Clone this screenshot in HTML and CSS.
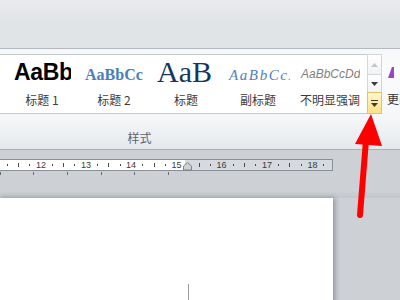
FILE: index.html
```html
<!DOCTYPE html>
<html lang="zh-CN">
<head>
<meta charset="utf-8">
<title>样式</title>
<link rel="stylesheet" href="styles.css">
</head>
<body>
<div class="top"></div>
<div class="ribbon">
  <div class="ribbon-row">
    <div class="gallery">
      <div class="pv pv1"><span>AaBb</span></div>
      <div class="lb">标题 1</div>
      <div class="pv pv2"><span>AaBbCc</span></div>
      <div class="lb">标题 2</div>
      <div class="pv pv3"><span>AaBb</span></div>
      <div class="lb">标题</div>
      <div class="pv pv4"><span>AaBbCcDd</span></div>
      <div class="lb">副标题</div>
      <div class="pv pv5"><span>AaBbCcDd</span></div>
      <div class="lb">不明显强调</div>
    </div>
    <div class="scroll">
      <div class="sbtn up"><svg width="7" height="4" viewBox="0 0 7 4"><polygon points="0,4 3.5,0 7,4"/></svg></div>
      <div class="sbtn down"><svg width="7" height="4" viewBox="0 0 7 4"><polygon points="0,0 3.5,4 7,0"/></svg></div>
      <div class="sbtn more"><svg width="7" height="7" viewBox="0 0 7 7"><rect x="0" y="0" width="7" height="1"/><polygon points="0,3 3.5,7 7,3"/></svg></div>
    </div>
    <div class="change">
      <svg class="change-icon" width="8" height="11" viewBox="0 0 8 11"><polygon points="0,11 4,0 6,0 6,11"/></svg>
      <span class="change-text">更改样式</span>
    </div>
  </div>
  <div class="group-label">样式</div>
</div>
<div class="ruler-zone">
  <svg class="ruler" width="400" height="48" viewBox="0 0 400 48">
    <rect x="-2" y="9.5" width="187.5" height="11" fill="#ffffff"/>
    <rect x="185.5" y="9.5" width="147" height="11" fill="#d6d9dd"/>
    <rect x="-2" y="9.5" width="334.5" height="11" fill="none" stroke="#8b9096"/>
    <g fill="#4a4a4a">
      <rect x="7" y="14" width="1" height="2"/><rect x="18" y="13" width="1" height="4"/><rect x="29" y="14" width="1" height="2"/>
      <rect x="52" y="14" width="1" height="2"/><rect x="63" y="13" width="1" height="4"/><rect x="74" y="14" width="1" height="2"/>
      <rect x="97" y="14" width="1" height="2"/><rect x="108" y="13" width="1" height="4"/><rect x="120" y="14" width="1" height="2"/>
      <rect x="142" y="14" width="1" height="2"/><rect x="154" y="13" width="1" height="4"/><rect x="165" y="14" width="1" height="2"/>
      <rect x="199" y="13" width="1" height="4"/><rect x="210" y="14" width="1" height="2"/>
      <rect x="233" y="14" width="1" height="2"/><rect x="244" y="13" width="1" height="4"/><rect x="255" y="14" width="1" height="2"/>
      <rect x="278" y="14" width="1" height="2"/><rect x="289" y="13" width="1" height="4"/><rect x="301" y="14" width="1" height="2"/>
      <rect x="323" y="14" width="1" height="2"/>
    </g>
    <g class="ruler-num" text-anchor="middle">
      <text x="41" y="18">12</text>
      <text x="86" y="18">13</text>
      <text x="131" y="18">14</text>
      <text x="176.5" y="18">15</text>
      <text x="221.5" y="18">16</text>
      <text x="267" y="18">17</text>
      <text x="312.5" y="18">18</text>
    </g>
    <polygon points="183.5,20 183.5,16 187.5,12.5 191.5,16 191.5,20" fill="#cfd1d4" stroke="#7e838a"/>
    <g fill="#6a6e74">
      <rect x="0" y="22" width="1" height="3"/><rect x="33" y="22" width="1" height="3"/><rect x="67" y="22" width="1" height="3"/>
      <rect x="101" y="22" width="1" height="3"/><rect x="134" y="22" width="1" height="3"/><rect x="168" y="22" width="1" height="3"/>
    </g>
  </svg>
</div>
<div class="page">
  <div class="caret"></div>
</div>
<svg class="arrow" width="400" height="300" viewBox="0 0 400 300">
  <line x1="366" y1="140" x2="360" y2="215" stroke="#fe0000" stroke-width="6" stroke-linecap="round"/>
  <polygon points="371,114 355,144 382,146" fill="#fe0000"/>
</svg>
</body>
</html>
```

FILE: styles.css
```css
* { box-sizing: border-box; }
html, body {
  margin: 0;
  padding: 0;
}
body {
  width: 400px;
  height: 300px;
  overflow: hidden;
  position: relative;
  background: #cdd1d6;
  font-family: "Noto Sans CJK SC", "Noto Sans", sans-serif;
}
.top {
  height: 49px;
  background: linear-gradient(#eaebed, #e1e4e7 40%, #e0e4e7);
  border-bottom: 1px solid #b3b8bf;
}
.ribbon {
  height: 101px;
  padding-top: 5px;
  background: linear-gradient(#f6f7f8, #fbfcfc 20%, #f4f6f8 70%, #e5e8ec);
  border-bottom: 1px solid #a9afb7;
}
.ribbon-row {
  display: flex;
  align-items: flex-start;
  width: 460px;
}
.ribbon-row > * { flex: none; }
.gallery {
  margin-left: -1px;
  width: 368px;
  height: 60px;
  border: 1px solid #c6cad0;
  border-right: none;
  background: #ffffff;
  padding-left: 6px;
  display: grid;
  grid-auto-flow: column;
  grid-template-columns: repeat(5, 72px);
  grid-template-rows: 31px 27px;
  align-items: baseline;
}
.pv {
  overflow: clip;
  white-space: nowrap;
  width: 66px;
  padding-left: 7px;
}
.pv1 { padding-left: 8px; width: 65px; }
.pv1 span {
  font-family: "Liberation Sans", Arial, sans-serif;
  font-weight: bold;
  font-size: 23px;
  letter-spacing: -0.3px;
  color: #000000;
  vertical-align: 2px;
}
.pv2 span {
  font-family: "Liberation Serif", serif;
  font-weight: bold;
  font-size: 16px;
  color: #4a7ebb;
  vertical-align: 2px;
}
.pv3 { width: 62px; }
.pv3 span {
  font-family: "Liberation Serif", serif;
  font-size: 30px;
  color: #17365d;
}
.pv4 { width: 68px; }
.pv4 span {
  font-family: "Liberation Serif", serif;
  font-style: italic;
  font-size: 15px;
  letter-spacing: 1.6px;
  color: #4f81bd;
  vertical-align: 2px;
}
.pv5 span {
  font-family: "Liberation Sans", Arial, sans-serif;
  font-style: italic;
  font-size: 12px;
  color: #7f7f7f;
  vertical-align: 4px;
}
.lb {
  align-self: start;
  padding-top: 6px;
  font-size: 12px;
  line-height: 16px;
  color: #3c3c3c;
  text-align: center;
  white-space: nowrap;
}
.scroll {
  width: 15px;
  display: flex;
  flex-direction: column;
}
.sbtn {
  border: 1px solid #d3d7dc;
  display: flex;
  align-items: center;
  justify-content: center;
  background: linear-gradient(#ffffff, #f1f3f5);
}
.sbtn + .sbtn { margin-top: -1px; }
.up { height: 21px; }
.up svg { fill: #c3c7cc; }
.down { height: 19px; }
.down svg { fill: #3a3a3a; }
.more {
  height: 22px;
  border-color: #e7c25c;
  background: linear-gradient(#fff8d3, #ffe99a 60%, #fde287);
}
.more svg { fill: #3a3a3a; }
.change {
  margin-left: 6px;
  display: flex;
  flex-direction: column;
  padding-top: 13px;
}
.change-icon {
  fill: #9b45c4;
}
.change-text {
  margin-top: 13px;
  margin-left: -1px;
  font-size: 12px;
  line-height: 16px;
  color: #333333;
  white-space: nowrap;
}
.group-label {
  width: 279px;
  margin-top: 16px;
  text-align: center;
  font-size: 12px;
  line-height: 16px;
  color: #5a6577;
}
.ruler-zone {
  height: 48px;
  background: linear-gradient(#cdd1d6, #cdd1d6 85%, #c3c7cc);
}
.ruler { display: block; }
.ruler-num text {
  font-family: "Liberation Sans", Arial, sans-serif;
  font-size: 9px;
  fill: #3b3b3b;
}
.page {
  margin-left: -1px;
  width: 334px;
  height: 110px;
  background: #ffffff;
  box-shadow: 2px 0 5px rgba(60, 70, 80, 0.45);
  padding-top: 86px;
}
.caret {
  margin-left: 189px;
  width: 1px;
  height: 16px;
  background: #9a9a9a;
}
.arrow {
  position: absolute;
  left: 0;
  top: 0;
  pointer-events: none;
}
```
